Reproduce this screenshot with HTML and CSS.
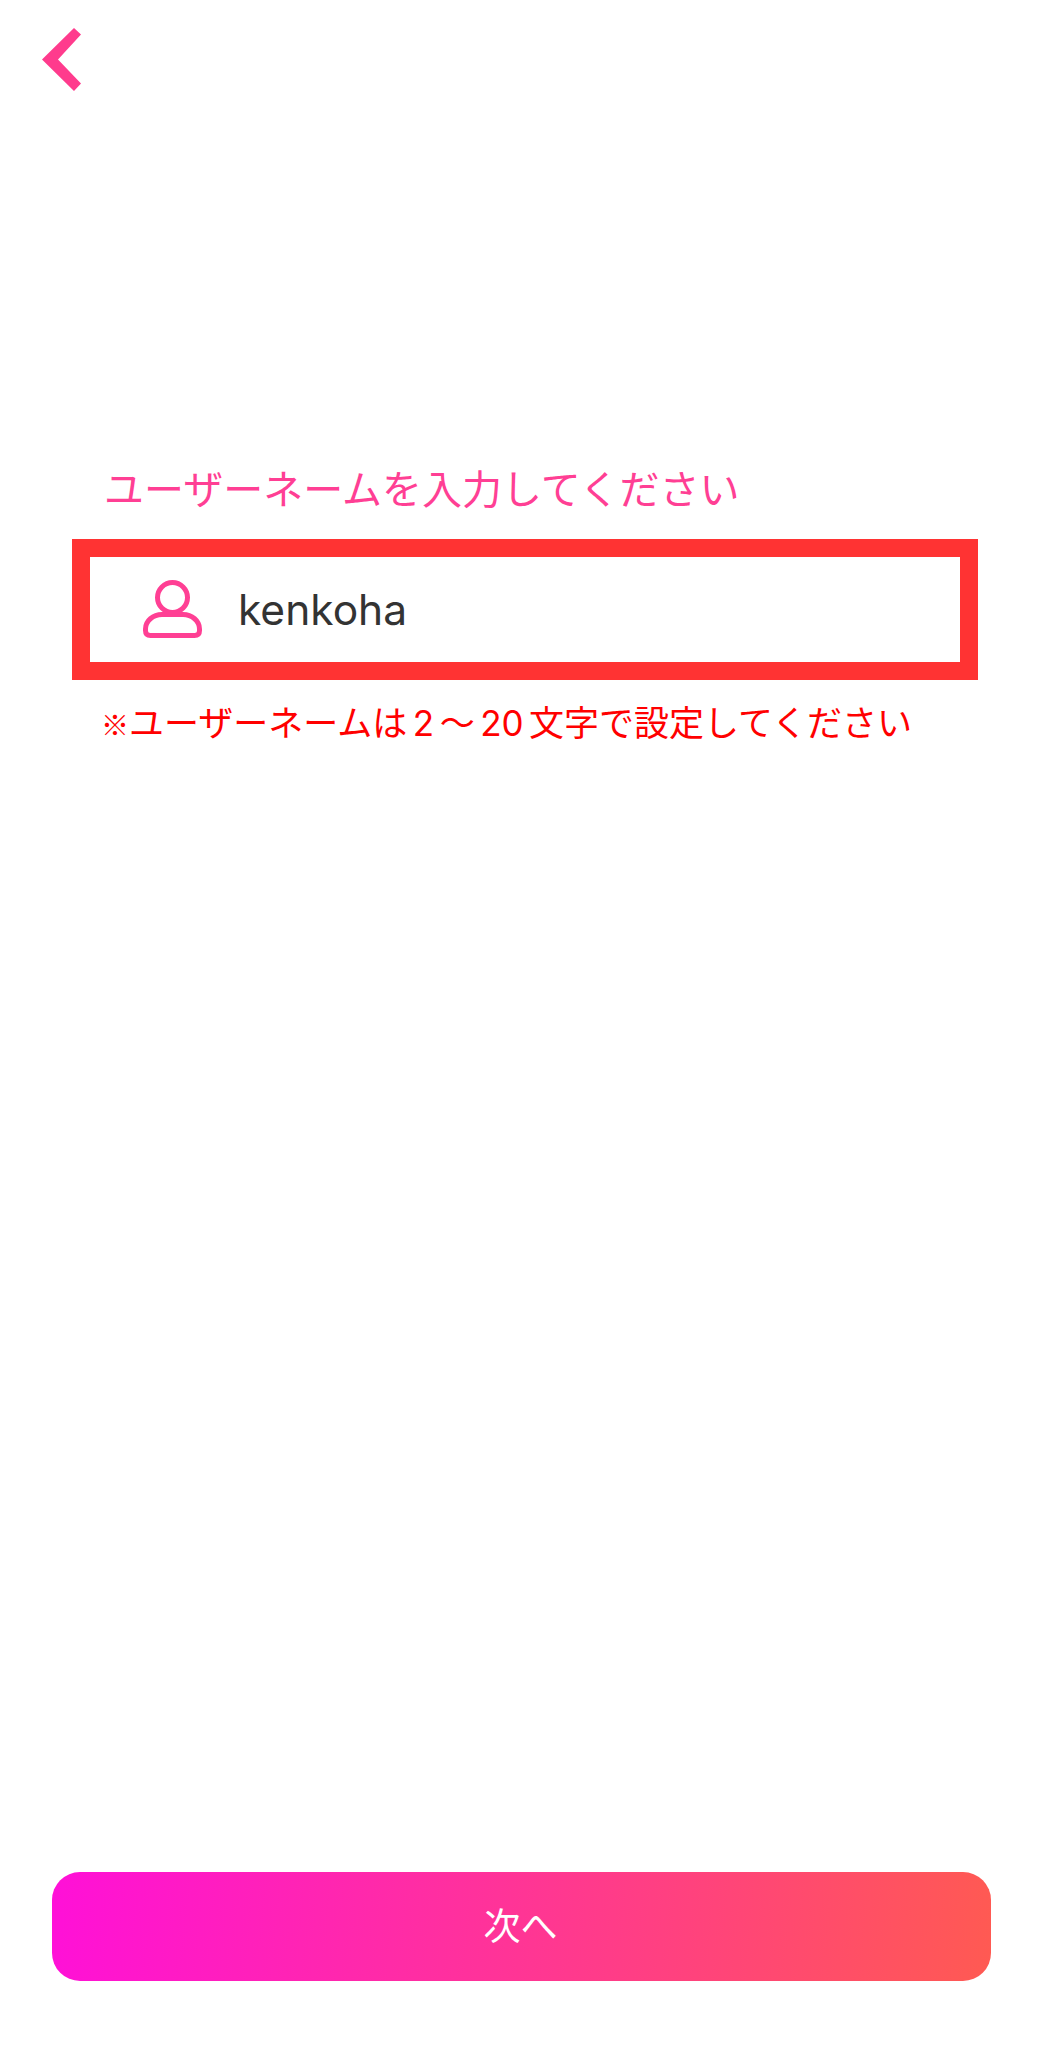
FILE: index.html
```html
<!DOCTYPE html>
<html lang="ja">
<head>
<meta charset="utf-8">
<title>ユーザーネーム</title>
<link rel="stylesheet" href="styles.css">
</head>
<body>
<div class="screen">
  <header class="topbar">
    <svg class="back" width="40" height="64" viewBox="0 0 40 64"><polygon fill="#ff3b8d" points="32,0 39,6.500 16,31.500 39,55.500 32,63 0,31.500"/></svg>
  </header>
  <main class="form">
    <p class="label">ユーザーネームを入力してください</p>
    <div class="field">
      <svg class="user" width="60" height="60" viewBox="0 0 60 60" fill="none" stroke="#ff3f94" stroke-width="5">
        <circle cx="30.500" cy="17.500" r="15"/>
        <path d="M20 34.500H41C50 34.500 57.500 41 57.500 49V50.500C57.500 54 56 55.500 52.500 55.500H8.500C5 55.500 3.500 54 3.500 50.500V49C3.500 41 11 34.500 20 34.500Z"/>
      </svg>
      <span class="value">kenkoha</span>
    </div>
    <p class="note"><span class="mark">※</span>ユーザーネームは<span class="num">2</span>～<span class="num">20</span>文字で設定してください</p>
  </main>
  <footer class="actions">
    <div class="next">次へ</div>
  </footer>
</div>
</body>
</html>
```
FILE: styles.css
```css
* { box-sizing: border-box; }
html, body { margin: 0; padding: 0; background: #fff; }
body { font-family: "Noto Sans CJK JP", "Noto Sans", sans-serif; }
.screen { width: 1044px; height: 2048px; display: flex; flex-direction: column; overflow: hidden; }
.topbar { padding: 28px 0 0 42px; height: 92px; flex: none; }
.back { display: block; }
.form { flex: none; margin-top: 364px; padding: 0 66px 0 72px; }
.label { margin: 0; padding-left: 32px; font-size: 40px; line-height: 62px; color: #ff3f94; font-weight: 400; white-space: nowrap; }
.field { margin-top: 21px; height: 141px; border: 18px solid #ff3333; display: flex; align-items: center; padding-left: 52px; background: #fff; }
.user { display: block; flex: none; }
.value { margin-left: 36px; font-family: Inter, "Noto Sans", sans-serif; font-size: 42.500px; color: #333; }
.note { margin: 15px 0 0; padding-left: 29px; font-size: 35px; line-height: 52px; color: #ff0000; font-weight: 400; white-space: nowrap; }
.mark { font-size: 28px; font-weight: 700; }
.num { font-family: Inter, sans-serif; font-weight: 400; margin: 0 5.500px; }
.actions { margin-top: auto; padding: 0 53px 67px 52px; }
.next { height: 109px; padding: 0 2px 6px 0; border-radius: 28px; background: linear-gradient(95deg, #ff10d8 0%, #ff5a52 100%); color: #fff; font-size: 37px; font-weight: 400; display: flex; align-items: center; justify-content: center; }
```
